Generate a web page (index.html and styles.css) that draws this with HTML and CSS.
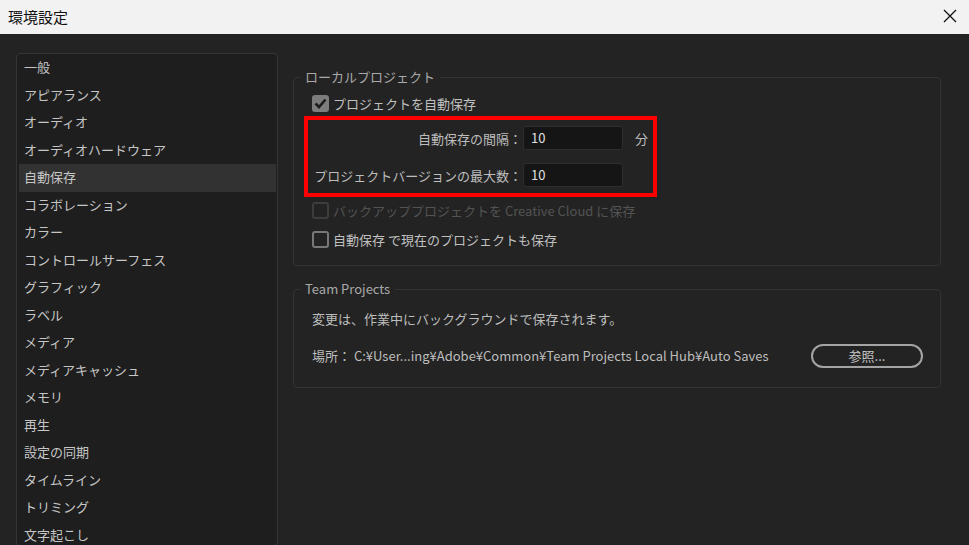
FILE: index.html
```html
<!DOCTYPE html>
<html lang="ja">
<head>
<meta charset="utf-8">
<title>環境設定</title>
<link rel="stylesheet" href="styles.css">
</head>
<body>
<div class="titlebar">
  <span class="title">環境設定</span>
  <svg class="close" width="14" height="14" viewBox="0 0 14 14"><path d="M1 1L13 13M13 1L1 13" stroke="#111" stroke-width="1.3" fill="none"/></svg>
</div>
<div class="main">
  <ul class="sidebar">
    <li>一般</li>
    <li>アピアランス</li>
    <li>オーディオ</li>
    <li>オーディオハードウェア</li>
    <li class="selected">自動保存</li>
    <li>コラボレーション</li>
    <li>カラー</li>
    <li>コントロールサーフェス</li>
    <li>グラフィック</li>
    <li>ラベル</li>
    <li>メディア</li>
    <li>メディアキャッシュ</li>
    <li>メモリ</li>
    <li>再生</li>
    <li>設定の同期</li>
    <li>タイムライン</li>
    <li>トリミング</li>
    <li>文字起こし</li>
  </ul>
  <div class="content">
    <fieldset class="group local">
      <legend>ローカルプロジェクト</legend>
      <div class="check-row">
        <span class="box checked"><svg width="13" height="11" viewBox="0 0 13 11"><path d="M1.5 5.5L5 9L11.5 1.5" stroke="#1c1c1c" stroke-width="2.6" fill="none"/></svg></span>
        <span class="label">プロジェクトを自動保存</span>
      </div>
      <div class="highlight">
        <div class="field-row">
          <span class="field-label">自動保存の間隔：</span>
          <span class="input">10</span>
          <span class="unit">分</span>
        </div>
        <div class="field-row">
          <span class="field-label">プロジェクトバージョンの最大数：</span>
          <span class="input">10</span>
        </div>
      </div>
      <div class="check-row disabled">
        <span class="box"></span>
        <span class="label">バックアッププロジェクトを Creative Cloud に保存</span>
      </div>
      <div class="check-row">
        <span class="box"></span>
        <span class="label">自動保存 で現在のプロジェクトも保存</span>
      </div>
    </fieldset>
    <fieldset class="group team">
      <legend>Team Projects</legend>
      <div class="text-row">変更は、作業中にバックグラウンドで保存されます。</div>
      <div class="path-row">
        <span class="path">場所： C:¥User...ing¥Adobe¥Common¥Team Projects Local Hub¥Auto Saves</span>
        <span class="button">参照...</span>
      </div>
    </fieldset>
  </div>
</div>
</body>
</html>
```
FILE: styles.css
```css
* { box-sizing: border-box; }
html, body {
  margin: 0;
  padding: 0;
  height: 545px;
  overflow: hidden;
  background: #232323;
  font-family: "Noto Sans CJK JP", "Noto Sans", sans-serif;
  font-size: 13px;
}
.titlebar {
  height: 34px;
  background: #f2f2f2;
  display: flex;
  align-items: center;
  justify-content: space-between;
  padding: 0 12px 0 8px;
}
.title {
  font-size: 15px;
  color: #111;
  margin-top: -1px;
}
.close { display: block; margin-top: -3px; }
.main {
  display: flex;
  padding: 19px 0 0 16px;
}
.sidebar {
  list-style: none;
  margin: 0;
  padding: 0 1px 0 2px;
  width: 262px;
  height: 493px;
  flex: none;
  background: #1e1e1e;
  border: 1px solid #343434;
  border-radius: 4px;
  overflow: hidden;
}
.sidebar li {
  height: 27.5px;
  line-height: 26.5px;
  padding-left: 5px;
  color: #c6c6c6;
  white-space: nowrap;
}
.sidebar li.selected {
  background: #323232;
}
.content {
  margin-left: 15px;
  width: 648px;
  flex: none;
}
.group {
  margin: 0;
  border: 1px solid #333;
  border-radius: 4px;
  padding: 0 0 0 18px;
  min-width: 0;
}
.group legend {
  margin-left: -12px;
  padding: 0 5px;
  height: 16px;
  line-height: 15px;
  color: #a9a9a9;
}
.local {
  margin-top: 16px;
  height: 197px;
  padding-top: 6px;
}
.check-row {
  display: flex;
  align-items: center;
  height: 24px;
  color: #c0c0c0;
}
.check-row .box {
  width: 17px;
  height: 17px;
  border: 2px solid #777;
  border-radius: 3px;
  margin-right: 4px;
  margin-left: 0;
  display: flex;
  align-items: center;
  justify-content: center;
  flex: none;
}
.check-row .box.checked {
  background: #7c7c7c;
  border-color: #7c7c7c;
}
.check-row.disabled { color: #535353; }
.check-row.disabled .box { border-color: #3d3d3d; }
.highlight {
  margin: 1px 0 1px -8px;
  width: 353px;
  border: 4px solid #ff0000;
  padding: 6px 0;
  display: flex;
  flex-direction: column;
  gap: 13px;
}
.field-row {
  display: flex;
  align-items: center;
  height: 24px;
}
.field-label {
  width: 214px;
  text-align: right;
  color: #bdbdbd;
  white-space: nowrap;
}
.input {
  width: 100px;
  height: 24px;
  margin-left: 1px;
  background: #151515;
  border: 1px solid #2e2e2e;
  border-radius: 3px;
  color: #e0e0e0;
  line-height: 22px;
  padding-left: 7px;
}
.unit {
  margin-left: 12px;
  color: #bdbdbd;
}
.check-row + .check-row { margin-top: 5px; }
.team {
  margin-top: 15px;
  height: 107px;
  padding-top: 12px;
}
.text-row {
  color: #bdbdbd;
  height: 20px;
  line-height: 20px;
}
.path-row {
  display: flex;
  align-items: center;
  margin-top: 14px;
  height: 24px;
}
.path {
  color: #bdbdbd;
  white-space: nowrap;
  width: 499px;
}
.button {
  width: 112px;
  height: 24px;
  border: 2px solid #a4a4a4;
  border-radius: 12px;
  color: #c4c4c4;
  text-align: center;
  line-height: 20px;
  margin-top: 2px;
}
```
